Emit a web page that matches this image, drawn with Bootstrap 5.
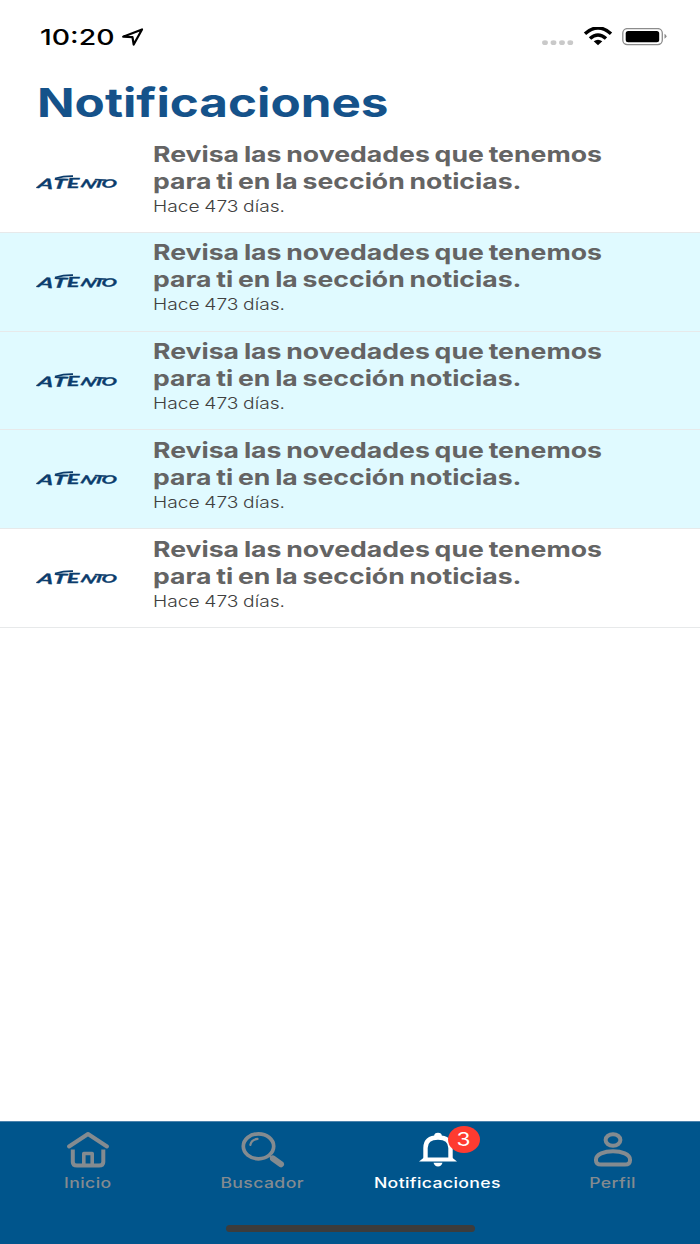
<!DOCTYPE html>
<html lang="es">
<head>
    <meta charset="UTF-8">
    <meta name="viewport" content="width=device-width, initial-scale=1">
    <title>Notificaciones</title>
    <link href="https://cdn.jsdelivr.net/npm/bootstrap@5.3.3/dist/css/bootstrap.min.css" rel="stylesheet">
    <style>
        body { font-family: Inter, "Liberation Sans", sans-serif; color: #000; }
        svg { display: block; }

        /* Texto ensanchado en horizontal */
        .ancho { display: inline-block; white-space: nowrap; transform-origin: 0 50%; }

        .barra-estado { height: 74px; padding: 24px 32px 0 40px; }
        .hora { font-size: 22px; font-weight: 500; line-height: 26px; width: 82px; }
        .hora .ancho { transform: scaleX(1.29); }
        .wifi { margin: 2.5px 9px 0 9px; }

        .titulo { height: 60.2px; padding: 4px 0 0 37px; font-size: 40px; font-weight: 700; line-height: 50px; color: #15528a; }
        .titulo .ancho { transform: scaleX(1.234); }

        .aviso { height: 98.7px; padding: 6.6px 0 0 36px; border-bottom: 1.5px solid #e7e9ea; }
        .aviso.nuevo { background: #e0faff; }
        .logo { width: 117px; padding-top: 33.4px; }
        .mensaje { font-size: 21.5px; font-weight: 700; line-height: 27px; color: #646464; word-spacing: -1.2px; }
        .mensaje .ancho, .hace .ancho { display: block; width: max-content; }
        .mensaje .linea1 { transform: scaleX(1.238); }
        .mensaje .linea2 { transform: scaleX(1.237); }
        .hace { font-size: 16px; font-weight: 300; line-height: 23px; color: #404040; word-spacing: -.6px; }
        .hace .ancho { transform: scaleX(1.2); }

        .menu { height: 123px; background: #00558c; border-top: 1px solid #4c83ad; color: #848b90; }
        .menu .opcion { width: 175px; padding-top: 9px; }
        .menu .opcion.activa { color: #fff; }
        .menu .texto { font-size: 14px; font-weight: 500; line-height: 20px; margin-top: 4px; letter-spacing: .3px; }
        .menu .ancho { transform-origin: 50% 50%; transform: scaleX(1.26); }
        .campana { width: 38px; }
        .globo { left: 29px; top: -5px; width: 32px; height: 27px; border-radius: 50%; background: #ff3b30; color: #fff; font-size: 18px; line-height: 27px; }
        .inicio-barra { width: 249px; height: 7px; border-radius: 4px; background: #3c3c3c; margin-top: 32px; }
    </style>
</head>
<body class="bg-white vh-100 d-flex flex-column overflow-hidden">

<!-- Barra de estado -->
<div class="barra-estado d-flex align-items-start">
    <div class="hora"><span class="ancho">10:20</span></div>
    <svg width="22" height="20" viewBox="0 0 22 20" class="mt-1">
        <path d="M1.2 8.7L20 1.5 11.7 16.5 10.5 9.2z" fill="none" stroke="#000" stroke-width="2.2" stroke-linejoin="round"/>
    </svg>
    <div class="ms-auto d-flex">
        <svg width="32" height="24" fill="#c9c9c9">
            <ellipse cx="3" cy="18.7" rx="2.9" ry="2.4"/>
            <ellipse cx="11.5" cy="18.7" rx="2.9" ry="2.4"/>
            <ellipse cx="20" cy="18.7" rx="2.9" ry="2.4"/>
            <ellipse cx="28.3" cy="18.7" rx="2.9" ry="2.4"/>
        </svg>
        <svg class="wifi" width="30" height="19" viewBox="0 0 30 19">
            <path d="M2 6.7Q15-4.7 28 6.7" fill="none" stroke="#000" stroke-width="3.5"/>
            <path d="M7 11.5Q15 4.4 23 11.5" fill="none" stroke="#000" stroke-width="3.5"/>
            <path d="M10.7 14.3Q15 11 19.3 14.3L15 18.3z"/>
        </svg>
        <svg width="46" height="20" class="mt-1">
            <rect x=".8" y=".6" width="39.5" height="16" rx="4.5" fill="none" stroke="#8c8c8c" stroke-width="1.3"/>
            <rect x="3.7" y="2.9" width="33.5" height="11.4" rx="2.5"/>
            <path d="M42.5 5.8Q46.5 8.3 42.5 10.8z" fill="#8c8c8c"/>
        </svg>
    </div>
</div>

<h1 class="titulo m-0"><span class="ancho">Notificaciones</span></h1>

<!-- Lista de avisos -->
<div id="avisos"></div>

<!-- Menú inferior -->
<nav class="menu mt-auto flex-shrink-0">
    <div class="d-flex text-center">
        <div class="opcion">
            <svg class="mx-auto" width="44" height="38" viewBox="0 0 44 38" fill="none" stroke="currentColor" stroke-width="4" stroke-linecap="round" stroke-linejoin="round">
                <path d="M3 15.5L22 3 41 15.5"/>
                <path d="M6.8 18.5V31Q6.8 34.5 11 34.5H33Q37.3 34.5 37.3 31V18.5" stroke-linecap="butt"/>
                <path d="M17.8 34V22.5H26.2V34" stroke-width="3.6"/>
            </svg>
            <div class="texto"><span class="ancho">Inicio</span></div>
        </div>
        <div class="opcion">
            <svg class="mx-auto" width="44" height="38" viewBox="0 0 44 38" fill="none" stroke="currentColor" stroke-linecap="round">
                <ellipse cx="17.5" cy="15.3" rx="15.2" ry="12.5" stroke-width="3.7"/>
                <path d="M9.3 14Q10.5 8.5 16.5 7.8" stroke-width="2.2"/>
                <path d="M32 27.5L40 33.3" stroke-width="6"/>
                <path d="M28 24.5L32 28" stroke-width="2"/>
            </svg>
            <div class="texto"><span class="ancho">Buscador</span></div>
        </div>
        <div class="opcion activa">
            <div class="campana position-relative mx-auto">
                <svg width="38" height="38" viewBox="0 0 38 38">
                    <path d="M6.5 29V17Q6.5 6.5 19 6.5T31.5 17V29" fill="none" stroke="#fff" stroke-width="4.4"/>
                    <path d="M15.2 6V4.8Q15.2 1.8 19 1.8T22.8 4.8V6z" fill="#fff"/>
                    <path d="M0 30.5L5 26.5H33L38 30.5z" fill="#fff"/>
                    <path d="M14.5 31.8H23.5Q22.5 35.5 19 35.5T14.5 31.8z" fill="#fff"/>
                </svg>
                <span class="globo position-absolute"><span class="ancho">3</span></span>
            </div>
            <div class="texto"><span class="ancho">Notificaciones</span></div>
        </div>
        <div class="opcion">
            <svg class="mx-auto" width="40" height="38" viewBox="0 0 40 38" fill="none" stroke="currentColor" stroke-width="4">
                <ellipse cx="20" cy="9" rx="7.4" ry="5.8"/>
                <path d="M3 28.5C3 17.5 37 17.5 37 28.5V29.5Q37 33.5 32 33.5H8Q3 33.5 3 29.5z"/>
            </svg>
            <div class="texto"><span class="ancho">Perfil</span></div>
        </div>
    </div>
    <div class="inicio-barra mx-auto"></div>
</nav>

<script src="https://cdn.jsdelivr.net/npm/bootstrap@5.3.3/dist/js/bootstrap.bundle.min.js"></script>
<script>
    const avisos = [
        { dias: 473, nuevo: false },
        { dias: 473, nuevo: true },
        { dias: 473, nuevo: true },
        { dias: 473, nuevo: true },
        { dias: 473, nuevo: false }
    ];

    // Cargar la lista
    document.getElementById('avisos').innerHTML = avisos.map(a => `
        <div class="aviso d-flex ${a.nuevo ? 'nuevo' : ''}">
            <div class="logo">
                <svg width="90" height="22" viewBox="0 0 90 22" fill="#0b3c6c" stroke="#0b3c6c" stroke-width=".3" font-family="Lato, sans-serif" font-weight="700" font-style="italic">
                    <text transform="scale(1.75 1)" x="0.5 9.5 17.6 25 32.6 37" y="14 14.5 14 12.9 13.2 13" rotate="8 4 0 14 4 8" font-size="14">AT<tspan font-size="13.5">E</tspan><tspan font-size="11.5">NTO</tspan></text>
                    <path d="M19 4.5Q28 2 37 2.2" fill="none" stroke-width="1.8"/>
                </svg>
            </div>
            <div>
                <div class="mensaje">
                    <span class="ancho linea1">Revisa las novedades que tenemos</span>
                    <span class="ancho linea2">para ti en la sección noticias.</span>
                </div>
                <div class="hace"><span class="ancho">Hace ${a.dias} días.</span></div>
            </div>
        </div>`).join('');
</script>
</body>
</html>
